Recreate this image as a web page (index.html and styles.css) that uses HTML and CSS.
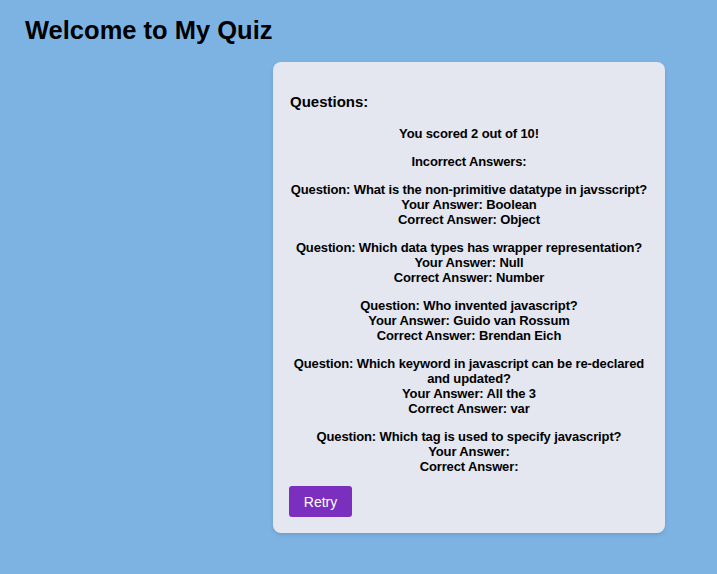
FILE: index.html
```html
<!DOCTYPE html>
<html>
<head>
<meta charset="utf-8">
<link rel="stylesheet" href="styles.css">
</head>
<body>
<h1 class="title">Welcome to My Quiz</h1>
<div class="wrap">
  <div class="card">
    <h2 class="qhead">Questions:</h2>
    <div class="results">
      <p>You scored 2 out of 10!</p>
      <p>Incorrect Answers:</p>
      <p>Question: What is the non-primitive datatype in javsscript?<br>Your Answer: Boolean<br>Correct Answer: Object</p>
      <p>Question: Which data types has wrapper representation?<br>Your Answer: Null<br>Correct Answer: Number</p>
      <p>Question: Who invented javascript?<br>Your Answer: Guido van Rossum<br>Correct Answer: Brendan Eich</p>
      <p>Question: Which keyword in javascript can be re-declared and updated?<br>Your Answer: All the 3<br>Correct Answer: var</p>
      <p>Question: Which tag is used to specify javascript?<br>Your Answer: <br>Correct Answer: </p>
    </div>
    <button class="retry">Retry</button>
  </div>
</div>
</body>
</html>
```
FILE: styles.css
```css
html, body {
  margin: 0;
  padding: 0;
}
body {
  background: #7db3e3;
  font-family: "Liberation Sans", Arial, sans-serif;
  color: #000;
  min-height: 574px;
}
.title {
  margin: 0;
  padding: 15px 0 0 25px;
  font-size: 25.5px;
  font-weight: bold;
  line-height: 30px;
}
.wrap {
  display: flex;
  justify-content: flex-end;
  padding: 17px 52px 0 0;
}
.card {
  width: 360px;
  background: #e4e7ef;
  border-radius: 8px;
  padding: 30px 16px 16px 16px;
  box-shadow: 0 2px 4px rgba(0, 0, 0, 0.12);
}
.qhead {
  margin: 0 0 15px 1px;
  font-size: 15px;
  line-height: 19px;
  font-weight: bold;
}
.results {
  text-align: center;
  font-size: 13px;
  font-weight: bold;
  line-height: 15px;
  letter-spacing: -0.13px;
}
.results p {
  margin: 13px 0;
}
.results p:last-child {
  margin-bottom: 12px;
}
.retry {
  background: #7b2fbf;
  color: #fff;
  border: none;
  border-radius: 3px;
  font-family: "Liberation Sans", Arial, sans-serif;
  font-size: 14px;
  width: 63px;
  height: 31px;
  padding: 0;
  margin-top: 0;
  display: block;
}
```
